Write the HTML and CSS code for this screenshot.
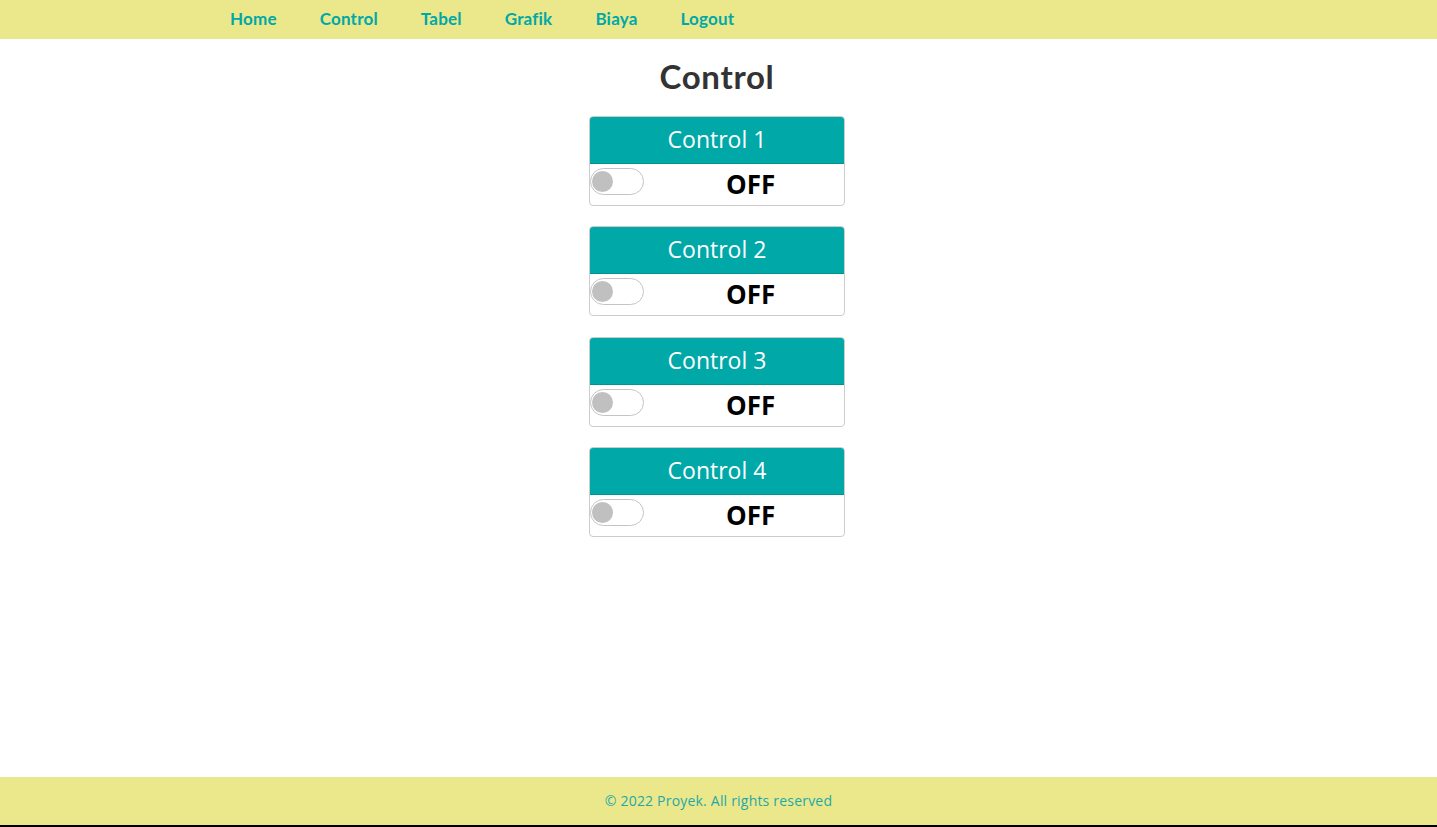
FILE: index.html
```html
<!DOCTYPE html>
<html lang="id">
<head>
<meta charset="utf-8">
<title>Control</title>
<link rel="stylesheet" href="styles.css">
</head>
<body>
<div class="page">
  <nav class="navbar">
    <a href="#" class="nav-link">Home</a>
    <a href="#" class="nav-link">Control</a>
    <a href="#" class="nav-link">Tabel</a>
    <a href="#" class="nav-link">Grafik</a>
    <a href="#" class="nav-link">Biaya</a>
    <a href="#" class="nav-link">Logout</a>
  </nav>
  <main class="content">
    <h1 class="title">Control</h1>
    <div class="cards">
      <div class="card">
        <div class="card-head">Control 1</div>
        <div class="card-body"><span class="toggle"><span class="knob"></span></span><span class="state">OFF</span></div>
      </div>
      <div class="card">
        <div class="card-head">Control 2</div>
        <div class="card-body"><span class="toggle"><span class="knob"></span></span><span class="state">OFF</span></div>
      </div>
      <div class="card">
        <div class="card-head">Control 3</div>
        <div class="card-body"><span class="toggle"><span class="knob"></span></span><span class="state">OFF</span></div>
      </div>
      <div class="card">
        <div class="card-head">Control 4</div>
        <div class="card-body"><span class="toggle"><span class="knob"></span></span><span class="state">OFF</span></div>
      </div>
    </div>
  </main>
  <footer class="footer">© 2022 Proyek. All rights reserved</footer>
</div>
</body>
</html>
```
FILE: styles.css
```css
html { background: #000; }
body { margin: 0; font-family: "Open Sans", "Liberation Sans", sans-serif; }
.page { height: 825px; background: #fff; display: flex; flex-direction: column; }
.navbar {
  height: 39px; background: #ebe78b; display: flex; align-items: center;
  padding-left: 230px; padding-bottom: 3px; gap: 43px; box-sizing: border-box;
}
.nav-link {
  font-family: Lato, "Open Sans", sans-serif; font-weight: 700; font-size: 17px;
  letter-spacing: 0.2px; color: #00a8a8; text-decoration: none;
}
.content {
  flex: 1; display: flex; flex-direction: column; align-items: center;
  padding-right: 3px;
}
.title {
  font-family: Lato, "Open Sans", sans-serif; font-weight: 700; font-size: 33px;
  letter-spacing: 0.7px; color: #333; margin: 18px 0 0; line-height: 38px;
}
.cards { margin-top: 21px; display: flex; flex-direction: column; gap: 20.4px; }
.card {
  width: 256px; box-sizing: border-box; border: 1px solid #ccc; border-radius: 4px;
  overflow: hidden; background: #fff;
}
.card-head {
  height: 46px; line-height: 45px; background: #00a8a8; color: #fff; font-size: 23px;
  text-align: center; border-bottom: 1px solid #00948f;
}
.card-body { height: 41px; display: flex; align-items: flex-start; }
.toggle {
  margin-top: 4px; width: 54px; height: 27px; box-sizing: border-box;
  border: 1px solid #c4c4c4; border-radius: 14px; display: flex; align-items: center;
  padding-left: 1px;
}
.knob { width: 21px; height: 21px; border-radius: 50%; background: #c0c0c0; }
.state {
  margin-left: 82px; font-weight: 700; font-size: 26px; line-height: 40px; color: #000;
}
.footer {
  height: 48px; background: #ebe78b; color: #1fa9a6; font-size: 14px;
  letter-spacing: 0.2px; padding-bottom: 2px; box-sizing: border-box;
  display: flex; align-items: center; justify-content: center;
}
```
